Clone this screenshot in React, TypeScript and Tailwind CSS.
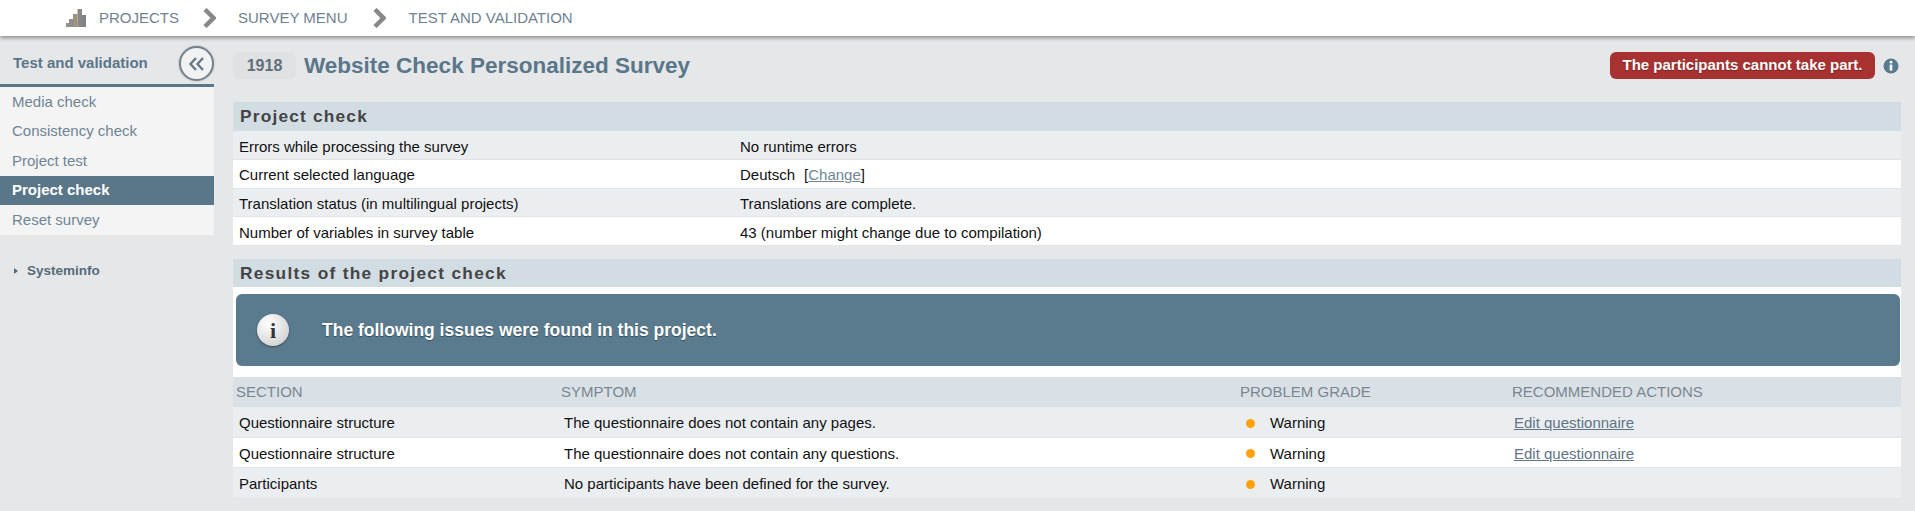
import React from 'react';

const checkRows = [
  { label: 'Errors while processing the survey', value: 'No runtime errors' },
  { label: 'Current selected language', value: 'Deutsch', change: true },
  { label: 'Translation status (in multilingual projects)', value: 'Translations are complete.' },
  { label: 'Number of variables in survey table', value: '43 (number might change due to compilation)' },
];

const issues = [
  { section: 'Questionnaire structure', symptom: 'The questionnaire does not contain any pages.', action: 'Edit questionnaire' },
  { section: 'Questionnaire structure', symptom: 'The questionnaire does not contain any questions.', action: 'Edit questionnaire' },
  { section: 'Participants', symptom: 'No participants have been defined for the survey.', action: '' },
];

const menu = ['Media check', 'Consistency check', 'Project test', 'Project check', 'Reset survey'];

function Chevron() {
  return (
    <svg width="14" height="20" viewBox="0 0 14 20" className="shrink-0">
      <path d="M3 1.5 L11.5 10 L3 18.5" fill="none" stroke="#8a8785" strokeWidth="4.5" />
    </svg>
  );
}

function BarsIcon() {
  return (
    <svg width="20" height="18" viewBox="0 0 20 18" className="shrink-0">
      <rect x="0" y="14" width="3" height="4" fill="#9a8f85" />
      <rect x="3" y="10" width="4" height="8" fill="#8f8f8f" />
      <rect x="7" y="5" width="4.5" height="13" fill="#a09080" />
      <rect x="11.5" y="0" width="4.5" height="18" fill="#8a8784" />
      <rect x="16" y="6" width="4" height="12" fill="#7d8488" />
    </svg>
  );
}

export default function App() {
  return (
    <div className="min-h-screen bg-[#e6e7e9] font-['Liberation_Sans',Arial,sans-serif] text-[15px] text-[#111]">
      <div className="h-9 bg-white shadow-[0_2px_4px_rgba(0,0,0,0.4)] relative flex items-center pl-[66px] text-[#6f8290]">
        <BarsIcon />
        <span className="ml-[13px]">PROJECTS</span>
        <span className="ml-[23px]"><Chevron /></span>
        <span className="ml-[22px]">SURVEY MENU</span>
        <span className="ml-[24px]"><Chevron /></span>
        <span className="ml-[23px]">TEST AND VALIDATION</span>
      </div>

      <div className="flex">
        <aside className="w-[214px] shrink-0">
          <div className="h-[51px] border-b-[3px] border-[#5a7689] flex items-center justify-between pl-[13px] pt-[6px] relative">
            <span className="font-bold text-[#5a7689]">Test and validation</span>
            <div className="absolute left-[179px] top-[10px] w-[35px] h-[35px] rounded-full border-[2px] border-[#76838b] bg-[#f1f2f3] flex items-center justify-center shadow-[0_0_2px_rgba(0,0,0,0.3)]">
              <svg width="18" height="16" viewBox="0 0 18 16">
                <path d="M8 2 L2.5 8 L8 14 M15 2 L9.5 8 L15 14" fill="none" stroke="#66798a" strokeWidth="2.4" />
              </svg>
            </div>
          </div>
          <div className="bg-[#f4f4f5]">
            {menu.map((m) => (
              <div
                key={m}
                className={
                  m === 'Project check'
                    ? 'h-[29.6px] flex items-center pl-[12px] bg-[#5a7689] text-white font-bold'
                    : 'h-[29.6px] flex items-center pl-[12px] text-[#6f8594]'
                }
              >
                {m}
              </div>
            ))}
          </div>
          <div className="mt-[26px] pl-[14px] flex items-center text-[13.5px] font-bold text-[#566b7a]">
            <span className="w-0 h-0 border-y-[3px] border-y-transparent border-l-[4px] border-l-[#566b7a]" />
            <span className="ml-[9px]">Systeminfo</span>
          </div>
        </aside>

        <main className="ml-[19px] w-[1668px] shrink-0">
          <div className="mt-4 h-[27px] flex items-center relative">
            <span className="w-[63px] h-[27px] rounded-md bg-[#e0e1e3] flex items-center justify-center font-bold text-[#5f6f7a] text-[16px]">1918</span>
            <h1 className="ml-2 text-[22.5px] font-bold text-[#5a7689]">Website Check Personalized Survey</h1>
            <div className="ml-auto flex items-center">
              <span className="w-[265px] h-[27px] rounded-md bg-[#a83232] text-white font-bold flex items-center justify-center [text-shadow:0_1px_1px_rgba(0,0,0,0.3)]">
                The participants cannot take part.
              </span>
              <svg width="16" height="16" viewBox="0 0 16 16" className="ml-[8px] mr-[2px]">
                <circle cx="8" cy="8" r="7.5" fill="#5a7a8f" />
                <circle cx="8" cy="4.2" r="1.4" fill="#fff" />
                <rect x="6.7" y="6.6" width="2.6" height="6" fill="#fff" />
              </svg>
            </div>
          </div>

          <h2 className="mt-[23px] h-[29px] bg-[#d2dce3] flex items-center pl-[7px] font-bold text-[17.3px] tracking-[1.2px] text-[#444]">Project check</h2>
          {checkRows.map((r, i) => (
            <div key={r.label} className={i % 2 === 0 ? 'h-[28.75px] pt-[4px] flex items-center bg-[#ebeef1] border-b border-[#e2e5e8]' : 'h-[28.75px] pt-[4px] flex items-center bg-white border-b border-[#e2e5e8]'}>
              <div className="w-[507px] pl-[6px]">{r.label}</div>
              <div>
                {r.value}
                {r.change && (
                  <span className="ml-[9px]">
                    [<a className="text-[#6f8594] underline">Change</a>]
                  </span>
                )}
              </div>
            </div>
          ))}

          <h2 className="mt-[13px] h-[28px] pt-[2px] bg-[#d2dce3] flex items-center pl-[7px] font-bold text-[17.3px] tracking-[1.3px] text-[#444]">Results of the project check</h2>
          <div className="bg-white h-[90px] pt-[7px] pl-[3px] pr-px">
            <div className="h-[72px] rounded-md bg-[#5a7b8e] flex items-center pl-[21px]">
              <span className="w-[32px] h-[32px] rounded-full bg-[radial-gradient(circle_at_35%_30%,#ffffff,#d8d8d8_70%,#aaa)] flex items-center justify-center font-['Liberation_Serif',serif] font-bold text-[#333] text-[22px] shadow-[0_1px_2px_rgba(0,0,0,0.4)]">i</span>
              <span className="ml-[33px] text-white font-bold text-[17.5px] [text-shadow:0_1px_1px_rgba(0,0,0,0.4)]">The following issues were found in this project.</span>
            </div>
          </div>

          <div className="h-[30px] pt-px bg-[#d9e0e6] flex items-center text-[#7b8790]">
            <div className="w-[325px] pl-[3px]">SECTION</div>
            <div className="w-[679px] pl-[3px]">SYMPTOM</div>
            <div className="w-[272px] pl-[3px]">PROBLEM GRADE</div>
            <div className="pl-[3px]">RECOMMENDED ACTIONS</div>
          </div>
          {issues.map((r, i) => (
            <div key={i} className={i % 2 === 0 ? 'h-[30.67px] pt-[3px] flex items-center bg-[#ebeef1] border-b border-[#e2e5e8]' : 'h-[30.67px] pt-[3px] flex items-center bg-white border-b border-[#e2e5e8]'}>
              <div className="w-[325px] pl-[6px]">{r.section}</div>
              <div className="w-[679px] pl-[6px]">{r.symptom}</div>
              <div className="w-[272px] pl-[9px] flex items-center">
                <span className="w-[9px] h-[9px] rounded-full bg-[#ffa20a]" />
                <span className="ml-[15px]">Warning</span>
              </div>
              <div className="pl-[5px]">{r.action && <a className="text-[#5f7484] underline">{r.action}</a>}</div>
            </div>
          ))}
        </main>
      </div>
    </div>
  );
}
